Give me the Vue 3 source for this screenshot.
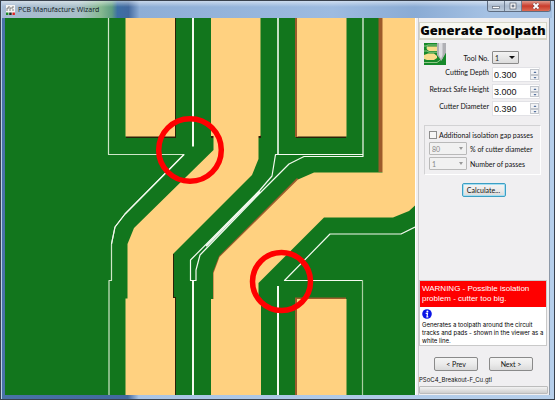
<script setup>
import { ref } from 'vue'

const tool = ref('1')
const fields = ref([
  { id: 'depth', label: 'Cutting Depth', value: '0.300' },
  { id: 'retract', label: 'Retract Safe Height', value: '3.000' },
  { id: 'diameter', label: 'Cutter Diameter', value: '0.390' },
])
const extraPasses = ref(false)
const percent = ref('80')
const passes = ref('1')

function step(field, amount) {
  field.value = Math.max(0, Number(field.value) + amount).toFixed(3)
}
</script>

<template>
  <div class="window">
    <header class="titlebar">
      <svg class="app-icon" viewBox="0 0 9 10" aria-hidden="true">
        <rect width="9" height="10" fill="#f4f4f4" />
        <path d="M1 6V3h2V1M4 6V3h3V1M7 6V4" fill="none" stroke="#666" stroke-width=".8" />
        <rect y="7.500" width="2.500" height="2.500" fill="#198a27" />
        <rect x="3.200" y="7.500" width="2.500" height="2.500" fill="#222" />
        <rect x="6.400" y="7.500" width="2.500" height="2.500" fill="#dd2020" />
      </svg>
      <h1 class="title">PCB Manufacture Wizard</h1>
      <div class="window-buttons">
        <button type="button" class="wb" aria-label="Minimize">
          <svg viewBox="0 0 10 8"><rect x="1.500" y="4.500" width="7" height="2" fill="#fff" stroke="#626a77" stroke-width=".7" /></svg>
        </button>
        <button type="button" class="wb" aria-label="Maximize">
          <svg viewBox="0 0 10 8"><rect x="2" y="1" width="6" height="6" fill="#fff" stroke="#626a77" stroke-width=".8" /><rect x="4" y="3" width="2" height="2" fill="#8995a8" stroke="#626a77" stroke-width=".6" /></svg>
        </button>
        <button type="button" class="wb close" aria-label="Close">
          <svg viewBox="0 0 10 8"><path d="M2.500 1.500l5 5M7.500 1.500l-5 5" stroke="#6b4347" stroke-width="3" /><path d="M2.500 1.500l5 5M7.500 1.500l-5 5" stroke="#fff" stroke-width="1.800" /></svg>
        </button>
      </div>
    </header>

    <main class="body">
      <svg class="viewer" viewBox="5 18 410 377" preserveAspectRatio="xMidYMid slice" role="img" aria-label="Toolpath viewer">
        <rect x="5" y="18" width="410" height="377" fill="#12761d" />
        <g fill="#2a2208">
          <path d="M126 18H176V138H126z" />
          <path d="M211 135H215V138H211zM257 135H261V138H257z" />
          <path d="M172 254H174V297H176V395H170V254z" />
          <path d="M296 135H346V138H296z" />
        </g>
        <g fill="#9c5b2b">
          <path d="M295 18H298V137H295zM378.500 18H383V172H378.500z" />
          <path d="M295 297.500H346V300H295zM295 298H298V395H295z" />
          <path d="M297 178L219 256 213 272V299H217V275L300 181z" />
        </g>
        <g fill="#ffd180">
          <path d="M125.500 18H175V136.500H125.500z" />
          <path d="M211 18H260.500V136H258.500V159L252 175 173 254V298H175V395H125.500V298.500H127.500V244L134 228 213.500 150V136H211z" />
          <path d="M297 18H346.500V136.500H297z" />
          <path d="M297 299H346.500V395H297z" />
          <path d="M382.500 18H415V205.500L409 211 393 217.500H324L258.500 283V298H261V395H211V299H213.500V273L219.500 257 298 179.500 314 172.500H382.500z" />
        </g>
        <g fill="none" stroke="#f4faf0" stroke-linejoin="round">
          <path d="M108.500 18V154.500H184L125 214 115 227 111.500 244V280.500H109V395" stroke="#cfe6c8" stroke-width="1.200" />
          <path d="M184 154.500L125 214 115 227 111.500 244" stroke-width="1.200" />
          <path d="M193 18V146.500M193 280V395M278 286V395" stroke-width="2" />
          <path d="M278 18V154" stroke-width="1.600" />
          <path d="M363 18V156.500H304L289 164 260 193 200 255 196 270V280.500H190.500V260L260 190 272 176 275.500 154.500H363" stroke-width="1.200" />
          <path d="M260 191.500L206 246" stroke-width="1.800" />
          <path d="M415 227L401 234H330L284.500 280.500H362.500" stroke-width="1.200" />
          <path d="M362.500 280V395" stroke="#a9cfa2" stroke-width="1.200" />
        </g>
        <g fill="none" stroke="#f00" stroke-width="5.500">
          <circle cx="190" cy="150" r="31.300" />
          <circle cx="281.500" cy="281.500" r="29" />
        </g>
      </svg>

      <form class="panel" @submit.prevent>
        <h2 class="heading">Generate Toolpath</h2>

        <div class="params">
          <svg class="tool-icon" viewBox="0 0 22 22" aria-hidden="true">
            <rect width="22" height="22" fill="#16892a" />
            <path d="M3 3.500H13V8H5L3 6.500zM0 12L4 10.500H10L13 13V15L10 17H3L0 16z" fill="#f8dc8c" />
            <path d="M0 3H2L4 2H14M0 8H3L5 9.200H14M0 19.500H13L19 15M3 3.500V6" fill="none" stroke="#c5e2b0" stroke-width=".7" />
            <path d="M13 0H22V10L17.500 18 13 12z" fill="#b0b0b5" />
            <path d="M15 0H18.500V12L17 16 15 12z" fill="#dedee2" />
            <path d="M22 10L17.500 18 22 20z" fill="#16892a" />
          </svg>
          <div class="row tool-row">
            <label for="tool">Tool No.</label>
            <span class="combo tool">
              <select id="tool" v-model="tool"><option>1</option><option>2</option></select>
            </span>
          </div>
          <div v-for="f in fields" :key="f.id" class="row">
            <label :for="f.id">{{ f.label }}</label>
            <span class="spin">
              <input :id="f.id" v-model="f.value" type="text" />
              <span class="arrows">
                <button type="button" :aria-label="'Increase ' + f.label" @click="step(f, 0.01)">
                  <svg viewBox="0 0 6 4"><path d="M1.500 3L3 1.200 4.500 3z" fill="#4a6a98" /></svg>
                </button>
                <button type="button" :aria-label="'Decrease ' + f.label" @click="step(f, -0.01)">
                  <svg viewBox="0 0 6 4"><path d="M1.500 1L3 2.800 4.500 1z" fill="#4a6a98" /></svg>
                </button>
              </span>
            </span>
          </div>
        </div>

        <div class="group">
          <label class="check"><input v-model="extraPasses" type="checkbox" />Additional isolation gap passes</label>
          <div class="option">
            <span class="combo"><select id="percent" v-model="percent" :disabled="!extraPasses"><option>80</option><option>50</option></select></span>
            <label for="percent">% of cutter diameter</label>
          </div>
          <div class="option">
            <span class="combo"><select id="passes" v-model="passes" :disabled="!extraPasses"><option>1</option><option>2</option></select></span>
            <label for="passes">Number of passes</label>
          </div>
        </div>

        <button type="submit" class="btn calculate">Calculate...</button>

        <section class="messages">
          <p class="warning" role="alert">WARNING - Possible isolation<br />problem - cutter too big.</p>
          <div class="info">
            <svg class="info-icon" viewBox="0 0 10 10" aria-hidden="true">
              <circle cx="5" cy="5" r="4.800" fill="#0a14e6" />
              <circle cx="5.400" cy="2.400" r="1" fill="#fff" />
              <path d="M3.700 4.300H5.500L5 7.800H6.300" fill="none" stroke="#fff" stroke-width="1.200" />
            </svg>
            <p>Generates a toolpath around the circuit<br />tracks and pads - shown in the viewer as a<br />white line.</p>
          </div>
        </section>

        <nav class="nav">
          <button type="button" class="btn">&lt; Prev</button>
          <button type="button" class="btn">Next &gt;</button>
        </nav>
        <div class="file">PSoC4_Breakout-F_Cu.gtl</div>
        <div class="progress"></div>
      </form>
    </main>
  </div>
</template>

<style>
body {
  margin: 0;
}
</style>

<style scoped>
* {
  box-sizing: border-box;
}
.window {
  display: flex;
  flex-direction: column;
  min-height: 100vh;
  padding: 0 5px 5px;
  border-top: 1px solid #39414d;
  background: linear-gradient(90deg, #4a72a8 0, #42699f 23%, #a9c4e4 25%, #b6cfeb 100%);
  box-shadow: inset 1px 0 #39414d, inset -1px -1px #39414d, inset 2px 0 #b9cfe8;
  font-family: Lato, "Liberation Sans", sans-serif;
  font-size: 7px;
  color: #111;
}
h1, h2, p {
  margin: 0;
}
button, select, input {
  margin: 0;
  padding: 0;
  font: inherit;
  color: inherit;
}
.titlebar {
  display: flex;
  flex: none;
  align-items: center;
  gap: 3px;
  height: 17px;
  margin: 0 -2px 0 -3px;
  padding-left: 4px;
  background:
    linear-gradient(180deg, rgba(255, 255, 255, 0.5), rgba(255, 255, 255, 0) 35%),
    linear-gradient(90deg, #a6bad3 0, #a9bfc9 14%, #86b890 18%, #5f9d82 20%, #3d6fa5 21%, #42699f 23%, #8eaed6 25%, #9dbbe0 60%, #8aabd4 75%, #a5c1e3 88%, #a5c1e3 100%);
}
.app-icon {
  width: 9px;
  height: 10px;
}
.title {
  flex: 1;
  font: 400 7px/12px "Open Sans", sans-serif;
  color: #101820;
}
.window-buttons {
  display: flex;
  align-self: flex-start;
  height: 11px;
  margin-right: 1px;
  border: 1px solid #5e6c80;
  border-top: 0;
  border-radius: 0 0 3px 3px;
  overflow: hidden;
}
.wb {
  display: grid;
  place-items: center;
  width: 17px;
  border: 0;
  border-right: 1px solid #6e7d92;
  background: linear-gradient(#d6e1ee, #a9b9cd 50%, #bccbdc);
}
.wb svg {
  width: 10px;
  height: 8px;
}
.wb.close {
  width: 28px;
  border: 0;
  background: linear-gradient(#e09a8c, #c93c2c 50%, #dc6a52);
}
.body {
  display: flex;
  flex: 1;
}
.viewer {
  flex: 1;
  min-width: 0;
  width: 100%;
  height: 377px;
  min-height: 100%;
  background: #12761d;
}
.panel {
  display: flex;
  flex: none;
  flex-direction: column;
  width: 135px;
  padding: 4px 2px 1px 3px;
  border: solid #fff;
  border-width: 0 0 0 1px;
  background: #f0eff1;
  box-shadow: inset 2px 0 #f0eff1, inset 3px 0 #c9c9cb, inset -1px 0 #8d99a8;
}
.heading {
  height: 18px;
  margin-right: 1px;
  border: solid #d5d5c8;
  border-width: 1px 1px 2px;
  background: #f7f8f2;
  font: 800 13px/15px "Open Sans", sans-serif;
  text-align: center;
  white-space: nowrap;
  color: #050505;
}
.params {
  display: grid;
  grid-template-columns: 22px 1fr;
  row-gap: 2px;
  margin: 3px 8px 0 5px;
}
.tool-icon {
  width: 22px;
  height: 22px;
}
.row {
  display: grid;
  grid-column: 1 / -1;
  grid-template-columns: 1fr 48px;
  align-items: start;
  gap: 3px;
}
.row label {
  padding-top: 1px;
  line-height: 8px;
  text-align: right;
  white-space: nowrap;
}
.tool-row {
  grid-column: 2;
  align-items: center;
  padding: 8px 0 1px;
}
.combo {
  position: relative;
  display: block;
}
.combo::after {
  content: "";
  position: absolute;
  right: 4px;
  top: 5px;
  border: solid transparent;
  border-width: 3px 2px 0;
  border-top-color: #999;
  pointer-events: none;
}
.combo select {
  display: block;
  width: 38px;
  height: 13px;
  padding-left: 2px;
  border: 1px solid #b9b9b9;
  border-radius: 1px;
  background: #f1f1f1;
  appearance: none;
  opacity: 1;
  color: #888;
}
.combo.tool {
  width: 27px;
}
.combo.tool::after {
  border-width: 3px 3px 0;
  border-top-color: #111;
}
.combo.tool select {
  width: 27px;
  border-color: #8b8b8b;
  background: linear-gradient(#f3f3f3, #dcdcdc);
  color: #222;
}
.spin {
  display: flex;
  height: 15px;
  border: 1px solid #e2e2e6;
  background: #fff;
}
.spin input {
  flex: 1;
  min-width: 0;
  padding-left: 1px;
  border: 0;
  background: none;
  font-family: "Liberation Sans", sans-serif;
  font-size: 9px;
}
.arrows {
  display: flex;
  flex-direction: column;
  width: 9px;
  padding: 1px 0;
}
.arrows button {
  display: grid;
  flex: 1;
  place-items: center;
  min-height: 0;
  border: 1px solid #c4c8ce;
  background: #f2f3f5;
}
.arrows svg {
  width: 6px;
  height: 4px;
}
.group {
  display: flex;
  flex-direction: column;
  gap: 2px;
  margin: 9px 7px 0 5px;
  padding: 4px;
  border: 1px solid #d2d2d4;
  border-right-color: #fff;
  border-bottom-color: #fff;
}
.check {
  display: flex;
  align-items: center;
  gap: 2px;
  line-height: 10px;
  white-space: nowrap;
}
.check input {
  flex: none;
  width: 8px;
  height: 8px;
  border: 1px solid #8d8d8d;
  background: #f6f6f6;
  appearance: none;
}
.check input:checked {
  background: #3465a4;
}
.option {
  display: flex;
  align-items: center;
  gap: 3px;
  white-space: nowrap;
}
.btn {
  height: 14px;
  border: 1px solid #8a8a8a;
  border-radius: 2px;
  background: linear-gradient(#f4f4f4, #ebebeb 50%, #dadada);
}
.calculate {
  align-self: center;
  width: 44px;
  margin-top: 8px;
  border-color: #3c9fc4;
  box-shadow: inset 0 0 0 1px #a5def2;
}
.messages {
  margin: auto 1px 0 0;
  border: 1px solid #c9c9c9;
  background: #fff;
}
.warning {
  padding: 3px 2px;
  background: #f00;
  font-family: "Liberation Sans", sans-serif;
  font-size: 8px;
  line-height: 10px;
  white-space: nowrap;
  color: #fff;
}
.info {
  padding: 2px 0 0 2px;
  font-family: Inter, sans-serif;
  font-size: 6px;
  line-height: 8px;
  white-space: nowrap;
  color: #000;
}
.info-icon {
  display: block;
  width: 10px;
  height: 10px;
  margin-bottom: 2px;
}
.nav {
  display: flex;
  justify-content: center;
  gap: 11px;
  margin-top: 11px;
}
.nav .btn {
  width: 44px;
}
.file {
  margin-top: 5px;
  font-family: Inter, sans-serif;
  font-size: 6px;
  line-height: 8px;
}
.progress {
  height: 8px;
  margin-top: 2px;
  border: 1px solid #bcbcbc;
  border-radius: 1px;
  background: linear-gradient(#f2f2f2, #cfcfcf);
}
</style>
